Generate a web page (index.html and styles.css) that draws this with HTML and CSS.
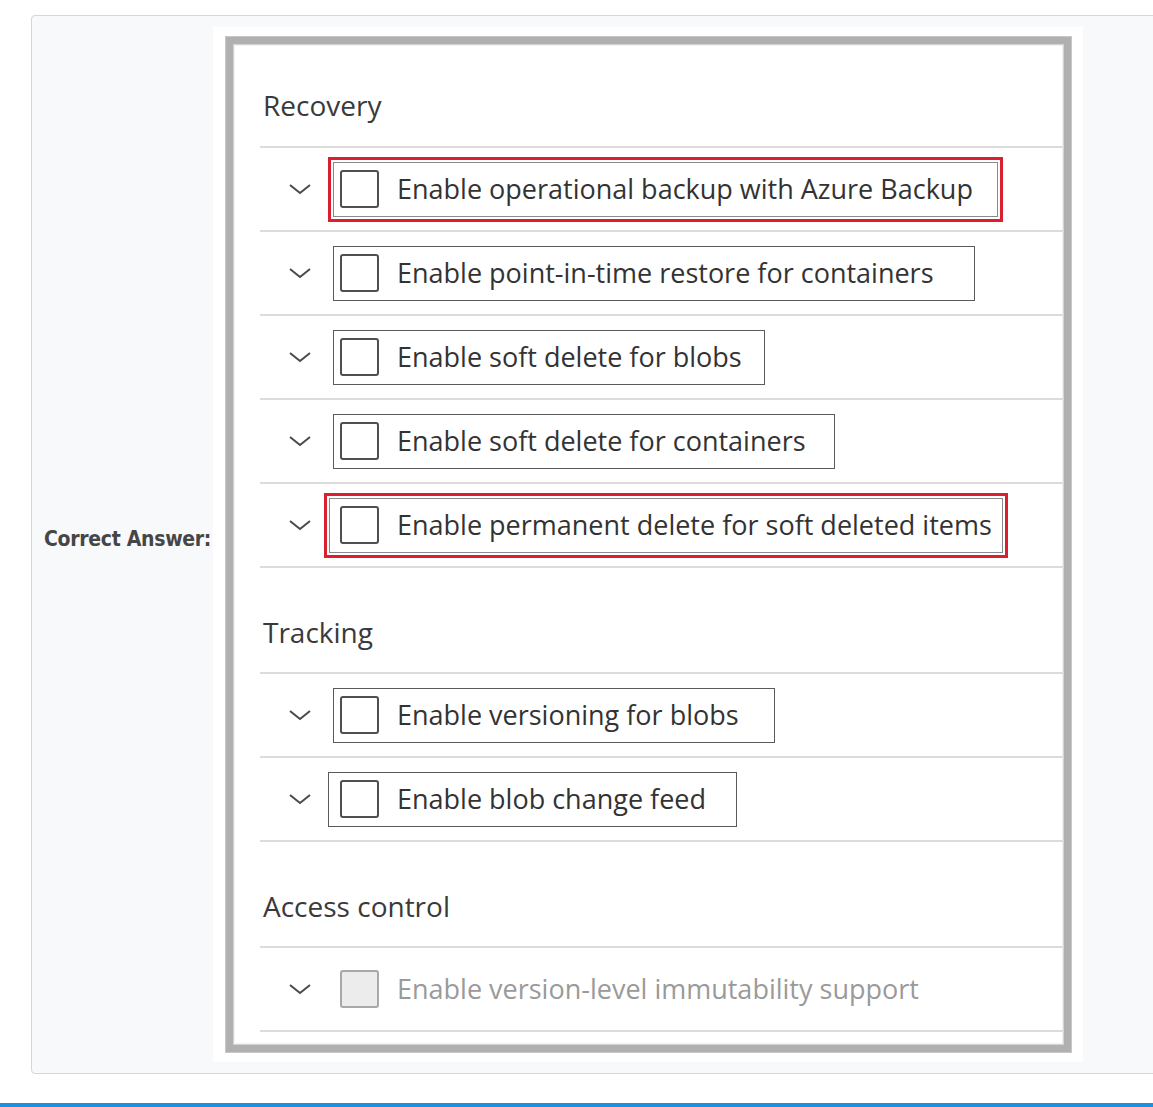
FILE: index.html
```html
<!DOCTYPE html>
<html lang="en">
<head>
<meta charset="utf-8">
<title>Correct Answer</title>
<link rel="stylesheet" href="styles.css">
</head>
<body>
<div class="answer">
  <div class="label">Correct Answer:</div>
  <div class="shot">
    <div class="frame">
      <div class="heading heading-first">Recovery</div>
      <ul class="list">
        <li class="row">
          <svg class="chev" viewBox="0 0 24 12" width="24" height="12"><polyline points="2,2 12,10 22,2"/></svg>
          <div class="item item-red"><span class="cb"></span><span class="txt">Enable operational backup with Azure Backup</span></div>
        </li>
        <li class="row">
          <svg class="chev" viewBox="0 0 24 12" width="24" height="12"><polyline points="2,2 12,10 22,2"/></svg>
          <div class="item item-wide"><span class="cb"></span><span class="txt">Enable point-in-time restore for containers</span></div>
        </li>
        <li class="row">
          <svg class="chev" viewBox="0 0 24 12" width="24" height="12"><polyline points="2,2 12,10 22,2"/></svg>
          <div class="item item-tight"><span class="cb"></span><span class="txt">Enable soft delete for blobs</span></div>
        </li>
        <li class="row">
          <svg class="chev" viewBox="0 0 24 12" width="24" height="12"><polyline points="2,2 12,10 22,2"/></svg>
          <div class="item"><span class="cb"></span><span class="txt">Enable soft delete for containers</span></div>
        </li>
        <li class="row">
          <svg class="chev" viewBox="0 0 24 12" width="24" height="12"><polyline points="2,2 12,10 22,2"/></svg>
          <div class="item item-red item-red-b"><span class="cb"></span><span class="txt">Enable permanent delete for soft deleted items</span></div>
        </li>
      </ul>
      <div class="heading">Tracking</div>
      <ul class="list">
        <li class="row">
          <svg class="chev" viewBox="0 0 24 12" width="24" height="12"><polyline points="2,2 12,10 22,2"/></svg>
          <div class="item item-roomy"><span class="cb"></span><span class="txt">Enable versioning for blobs</span></div>
        </li>
        <li class="row">
          <svg class="chev" viewBox="0 0 24 12" width="24" height="12"><polyline points="2,2 12,10 22,2"/></svg>
          <div class="item item-left"><span class="cb"></span><span class="txt">Enable blob change feed</span></div>
        </li>
      </ul>
      <div class="heading">Access control</div>
      <ul class="list">
        <li class="row">
          <svg class="chev" viewBox="0 0 24 12" width="24" height="12"><polyline points="2,2 12,10 22,2"/></svg>
          <div class="item item-disabled"><span class="cb"></span><span class="txt">Enable version-level immutability support</span></div>
        </li>
      </ul>
    </div>
  </div>
</div>
<div class="rule"></div>
</body>
</html>
```
FILE: styles.css
```css
html, body {
  margin: 0;
  padding: 0;
  background: #ffffff;
  overflow-x: hidden;
}

.answer {
  display: flex;
  box-sizing: border-box;
  height: 1059px;
  margin: 15px -20px 0 31px;
  border: 1px solid #d6d6d6;
  border-radius: 4px;
  background: #f8f9fa;
}

.label {
  box-sizing: border-box;
  width: 181px;
  flex: none;
  align-self: center;
  padding: 0 0 12px 12px;
  font-family: "DejaVu Sans", Roboto, sans-serif;
  font-stretch: condensed;
  font-weight: 700;
  font-size: 21px;
  letter-spacing: -0.3px;
  color: #464646;
  white-space: nowrap;
}

.shot {
  flex: none;
  align-self: flex-start;
  box-sizing: border-box;
  width: 870px;
  margin-top: 11px;
  padding: 10px 12px 10px 13px;
  background: #ffffff;
}

.frame {
  box-sizing: border-box;
  width: 845px;
  height: 1015px;
  border: 7px solid #b0b0b0;
  box-shadow: inset 0 0 0 1px #d4d4d4, inset 0 0 0 2px #f2f2f2, 0 0 0 1px #c8c8c8;
  background: #ffffff;
  font-family: "Open Sans", "Noto Sans", sans-serif;
  color: #333333;
}

.heading {
  padding: 46px 0 22px 30px;
  font-size: 28px;
  line-height: 36px;
  color: #3a3a3a;
}

.heading-first {
  padding-top: 43px;
  padding-bottom: 23px;
}

.list {
  list-style: none;
  margin: 0 0 0 27px;
  padding: 0;
  border-bottom: 2px solid #dcdcdc;
}

.row {
  display: flex;
  align-items: center;
  height: 82px;
  border-top: 2px solid #dcdcdc;
  padding-left: 28px;
}

.chev {
  flex: none;
  fill: none;
  stroke: #4a4a4a;
  stroke-width: 2;
}

.item {
  display: flex;
  align-items: center;
  box-sizing: border-box;
  height: 55px;
  margin-left: 21px;
  padding: 0 28px 0 6px;
  border: 1px solid #5a5a5a;
  gap: 18px;
}

.item-wide { padding-right: 40px; }
.item-tight { padding-right: 22px; }
.item-roomy { padding-right: 35px; }
.item-left { margin-left: 16px; padding-left: 11px; padding-right: 30px; }

.item-red {
  height: 65px;
  margin-left: 16px;
  padding-left: 9px;
  padding-right: 27px;
  border: 3px solid #d9202c;
  box-shadow: inset 0 0 0 2px #ffffff, inset 0 0 0 3px #8a8a8a;
}

.item-red-b {
  margin-left: 12px;
  padding-left: 13px;
  padding-right: 13px;
}

.cb {
  flex: none;
  box-sizing: border-box;
  width: 39px;
  height: 38px;
  border: 2px solid #4f4f4f;
  border-radius: 3px;
  background: #ffffff;
}

.txt {
  font-size: 27px;
  line-height: 34px;
  white-space: nowrap;
  color: #333333;
}

.item-disabled {
  border-color: transparent;
}

.item-disabled .cb {
  border-color: #a8a8a8;
  background: #ececec;
}

.item-disabled .txt {
  color: #9a9a9a;
}

.rule {
  margin-top: 29px;
  height: 4px;
  background: #1b8fe0;
}
```
